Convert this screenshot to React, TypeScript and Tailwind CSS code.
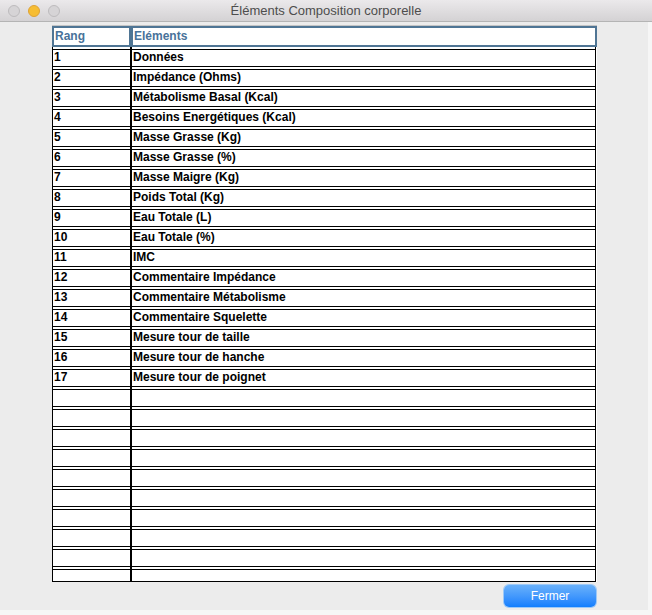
import React from 'react';

const elements: string[] = [
  'Données',
  'Impédance (Ohms)',
  'Métabolisme Basal (Kcal)',
  'Besoins Energétiques (Kcal)',
  'Masse Grasse (Kg)',
  'Masse Grasse (%)',
  'Masse Maigre (Kg)',
  'Poids Total (Kg)',
  'Eau Totale (L)',
  'Eau Totale (%)',
  'IMC',
  'Commentaire Impédance',
  'Commentaire Métabolisme',
  'Commentaire Squelette',
  'Mesure tour de taille',
  'Mesure tour de hanche',
  'Mesure tour de poignet',
];

const TOTAL_ROWS = 27;

const App: React.FC = () => {
  const rows = Array.from({ length: TOTAL_ROWS }, (_, i) => ({
    rang: i < elements.length ? String(i + 1) : '',
    label: elements[i] ?? '',
  }));

  return (
    <div className="w-[652px] h-[615px] bg-[#f6f6f6] overflow-hidden font-['Liberation_Sans',Arial,sans-serif]">
      {/* title bar */}
      <div className="relative h-[22px] bg-gradient-to-b from-[#ebe9eb] to-[#d4d2d4] border-b border-[#b4b4b4] flex items-center justify-center">
        <div className="absolute left-[8px] top-[5px] flex gap-[8px]">
          <span className="w-[12px] h-[12px] rounded-full bg-[#d6d4d6] border border-[#bdbbbd]" />
          <span className="w-[12px] h-[12px] rounded-full bg-[#f6bd33] border border-[#dea235]" />
          <span className="w-[12px] h-[12px] rounded-full bg-[#d6d4d6] border border-[#bdbbbd]" />
        </div>
        <span className="text-[13px] text-[#4d4d4d] leading-none">Éléments Composition corporelle</span>
      </div>

      <div className="flex">
        <div className="w-[648px] h-[588px] bg-[#ececec] pl-[52px] pt-[3px]">
          {/* table */}
          <div className="w-[545px] bg-white">
            <div className="h-[1px] bg-[#c4c4c4]" />
            {/* header */}
            <div className="flex h-[21px]">
              <div className="w-[79px] border-2 border-[#4f7594] flex items-center pl-[1px] pb-[1px]">
                <span className="text-[12px] font-bold text-[#48729a]">Rang</span>
              </div>
              <div className="flex-1 border-2 border-[#4f7594] flex items-center pl-[1px] pb-[1px]">
                <span className="text-[12px] font-bold text-[#48729a]">Eléments</span>
              </div>
            </div>
            {/* body */}
            <div className="flex h-[535px] overflow-hidden border-b border-black w-[544px]">
              <div className="w-[79px] border-x border-black">
                {rows.map((r, i) => (
                  <div key={i} className="h-[18px] mt-[2px] border-y border-black flex items-center pl-[1px] pb-[2px]">
                    <span className="text-[12px] font-bold text-black leading-[14px]">{r.rang}</span>
                  </div>
                ))}
              </div>
              <div className="flex-1 border-x border-black">
                {rows.map((r, i) => (
                  <div key={i} className="h-[18px] mt-[2px] border-y border-black flex items-center pl-[1px] pb-[2px]">
                    <span className="text-[12px] font-bold text-black leading-[14px] whitespace-nowrap">{r.label}</span>
                  </div>
                ))}
              </div>
            </div>
          </div>

          <div className="w-[544px] flex justify-end mt-[3px]">
            <button className="w-[92px] h-[22px] rounded-[5px] bg-gradient-to-b from-[#69b1fa] to-[#0f7efe] shadow-[0_0_0_1px_#9ec9f7] text-white text-[12px] leading-none">
              Fermer
            </button>
          </div>
        </div>
        <div className="flex-1" />
      </div>
    </div>
  );
};

export default App;
